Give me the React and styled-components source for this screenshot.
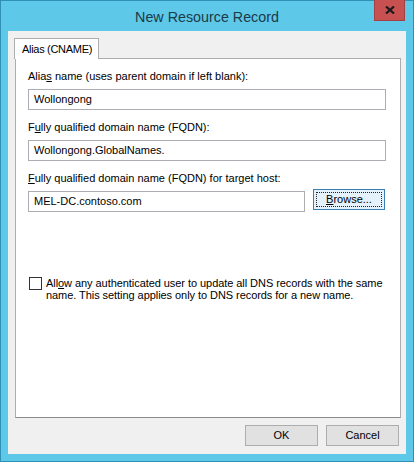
import React from "react";
import styled, { createGlobalStyle } from "styled-components";

const Global = createGlobalStyle`
  html, body { margin: 0; padding: 0; }
  body { font-family: "Liberation Sans", Arial, sans-serif; font-size: 11px; color: #000; }
  * { box-sizing: border-box; }
`;

const Window = styled.div`
  width: 414px;
  height: 462px;
  background: #5ec8e8;
  border: 1px solid #2f8fb4;
  display: flex;
  flex-direction: column;
  padding: 0 7px 7px 7px;
`;

const TitleBar = styled.div`
  height: 30px;
  flex: none;
  position: relative;
  display: flex;
  align-items: center;
  justify-content: center;
`;

const Title = styled.div`
  font-family: "Liberation Sans", Arial, sans-serif;
  font-size: 14.3px;
  color: #1c3a48;
  margin-top: 1px;
`;

const CloseButton = styled.div`
  position: absolute;
  top: -1px;
  right: 1px;
  width: 31px;
  height: 21px;
  background: #c75050;
  border: 1px solid #a44040;
  border-top: none;
  display: flex;
  align-items: center;
  justify-content: center;
`;

const Client = styled.div`
  flex: 1;
  background: #f0f0f0;
  display: flex;
  flex-direction: column;
  padding: 7px 5px 8px 6px;
`;

const TabStrip = styled.div`
  display: flex;
  position: relative;
  z-index: 1;
`;

const Tab = styled.div`
  height: 21px;
  padding: 0 6px 0 7px;
  background: #fff;
  border: 1px solid #adadad;
  border-bottom: none;
  margin-bottom: -1px;
  display: flex;
  align-items: center;
  line-height: 13px;
  letter-spacing: -0.3px;
`;

const Panel = styled.div`
  height: 360px;
  margin-left: 1px;
  background: #fff;
  border: 1px solid #adadad;
  border-bottom-color: #8a8a8a;
  padding: 11px 14px 0 12px;
  display: flex;
  flex-direction: column;
`;

const Field = styled.div`
  display: flex;
  flex-direction: column;
  margin-bottom: ${(p) => p.$gap ?? 11}px;
`;

const Label = styled.div`
  line-height: 13px;
  margin-bottom: 6px;
  white-space: nowrap;
`;

const Row = styled.div`
  display: flex;
  align-items: flex-start;
`;

const TextBox = styled.div`
  height: 21px;
  width: ${(p) => p.$width || "100%"};
  border: 1px solid #abadb3;
  background: #fff;
  padding: 0 5px;
  display: flex;
  align-items: center;
  line-height: 13px;
  white-space: nowrap;
`;

const Button = styled.div`
  width: ${(p) => p.$w || 73}px;
  height: 21px;
  background: ${(p) => (p.$focus ? "#e5f1fb" : "#e1e1e1")};
  border: 1px solid ${(p) => (p.$focus ? "#3c7fb1" : "#adadad")};
  display: flex;
  align-items: center;
  justify-content: center;
  line-height: 13px;
  position: relative;
  margin-top: ${(p) => p.$mt || 0}px;
  margin-left: ${(p) => p.$ml || 0}px;
`;

const FocusRect = styled.span`
  position: absolute;
  inset: 2px;
  border: 1px dotted #222;
`;

const CheckRow = styled.div`
  display: flex;
  align-items: flex-start;
  margin-top: 65px;
  margin-left: 1px;
`;

const CheckBox = styled.div`
  width: 13px;
  height: 13px;
  flex: none;
  border: 1px solid #333;
  background: #fff;
  margin-right: 4px;
`;

const CheckText = styled.div`
  line-height: 12px;
  white-space: nowrap;
  letter-spacing: -0.06px;
`;

const Footer = styled.div`
  display: flex;
  justify-content: flex-end;
  gap: 8px;
  margin-top: 7px;
  padding-right: 2px;
`;

const U = styled.span`
  text-decoration: underline;
  text-underline-offset: 1px;
`;

export default function App() {
  return (
    <>
      <Global />
      <Window>
        <TitleBar>
          <Title>New Resource Record</Title>
          <CloseButton>
            <svg width="10" height="8" viewBox="0 0 10 8">
              <path d="M1 0.5 L9 7.5 M9 0.5 L1 7.5" stroke="#1a1a1a" strokeWidth="2.2" />
            </svg>
          </CloseButton>
        </TitleBar>
        <Client>
          <TabStrip>
            <Tab>Alias (CNAME)</Tab>
          </TabStrip>
          <Panel>
            <Field>
              <Label>
                Alia<U>s</U> name (uses parent domain if left blank):
              </Label>
              <TextBox>Wollongong</TextBox>
            </Field>
            <Field>
              <Label>
                F<U>u</U>lly qualified domain name (FQDN):
              </Label>
              <TextBox>Wollongong.GlobalNames.</TextBox>
            </Field>
            <Field $gap={0}>
              <Label>
                <U>F</U>ully qualified domain name (FQDN) for target host:
              </Label>
              <Row>
                <TextBox $width="277px">MEL-DC.contoso.com</TextBox>
                <Button $focus $w={72} $ml={8} $mt={-2}>
                  <FocusRect />
                  <span>
                    <U>B</U>rowse...
                  </span>
                </Button>
              </Row>
            </Field>
            <CheckRow>
              <CheckBox />
              <CheckText>
                All<U>o</U>w any authenticated user to update all DNS records with the same
                <br />
                name. This setting applies only to DNS records for a new name.
              </CheckText>
            </CheckRow>
          </Panel>
          <Footer>
            <Button>OK</Button>
            <Button>Cancel</Button>
          </Footer>
        </Client>
      </Window>
    </>
  );
}
